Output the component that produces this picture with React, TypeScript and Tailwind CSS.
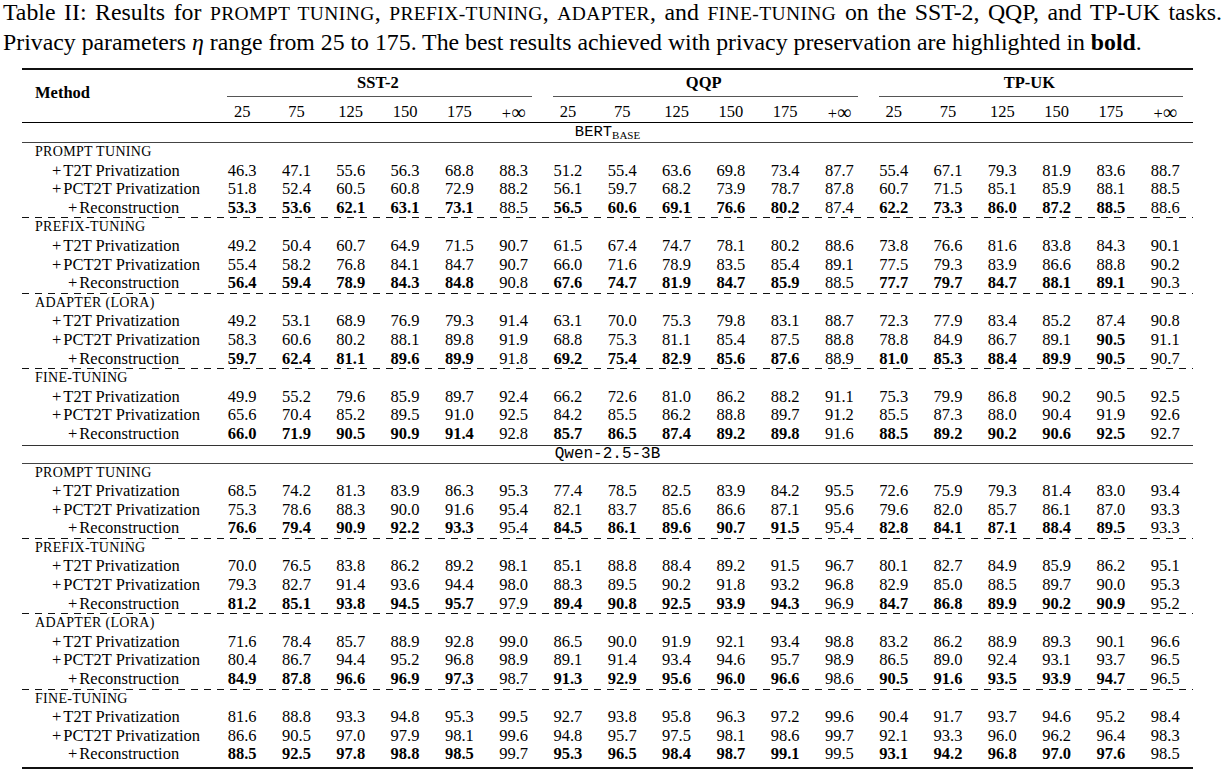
import React from "react";

const COLS = ["25", "75", "125", "150", "175", "+∞"];
const TASKS = ["SST-2", "QQP", "TP-UK"];

type Block = { title: string; rows: [string, string, string] };

const BERT: Block[] = [
  {
    title: "PROMPT TUNING",
    rows: [
      "46.3 47.1 55.6 56.3 68.8 88.3 51.2 55.4 63.6 69.8 73.4 87.7 55.4 67.1 79.3 81.9 83.6 88.7",
      "51.8 52.4 60.5 60.8 72.9 88.2 56.1 59.7 68.2 73.9 78.7 87.8 60.7 71.5 85.1 85.9 88.1 88.5",
      "53.3 53.6 62.1 63.1 73.1 88.5 56.5 60.6 69.1 76.6 80.2 87.4 62.2 73.3 86.0 87.2 88.5 88.6",
    ],
  },
  {
    title: "PREFIX-TUNING",
    rows: [
      "49.2 50.4 60.7 64.9 71.5 90.7 61.5 67.4 74.7 78.1 80.2 88.6 73.8 76.6 81.6 83.8 84.3 90.1",
      "55.4 58.2 76.8 84.1 84.7 90.7 66.0 71.6 78.9 83.5 85.4 89.1 77.5 79.3 83.9 86.6 88.8 90.2",
      "56.4 59.4 78.9 84.3 84.8 90.8 67.6 74.7 81.9 84.7 85.9 88.5 77.7 79.7 84.7 88.1 89.1 90.3",
    ],
  },
  {
    title: "ADAPTER (LORA)",
    rows: [
      "49.2 53.1 68.9 76.9 79.3 91.4 63.1 70.0 75.3 79.8 83.1 88.7 72.3 77.9 83.4 85.2 87.4 90.8",
      "58.3 60.6 80.2 88.1 89.8 91.9 68.8 75.3 81.1 85.4 87.5 88.8 78.8 84.9 86.7 89.1 *90.5 91.1",
      "59.7 62.4 81.1 89.6 89.9 91.8 69.2 75.4 82.9 85.6 87.6 88.9 81.0 85.3 88.4 89.9 90.5 90.7",
    ],
  },
  {
    title: "FINE-TUNING",
    rows: [
      "49.9 55.2 79.6 85.9 89.7 92.4 66.2 72.6 81.0 86.2 88.2 91.1 75.3 79.9 86.8 90.2 90.5 92.5",
      "65.6 70.4 85.2 89.5 91.0 92.5 84.2 85.5 86.2 88.8 89.7 91.2 85.5 87.3 88.0 90.4 91.9 92.6",
      "66.0 71.9 90.5 90.9 91.4 92.8 85.7 86.5 87.4 89.2 89.8 91.6 88.5 89.2 90.2 90.6 92.5 92.7",
    ],
  },
];

const QWEN: Block[] = [
  {
    title: "PROMPT TUNING",
    rows: [
      "68.5 74.2 81.3 83.9 86.3 95.3 77.4 78.5 82.5 83.9 84.2 95.5 72.6 75.9 79.3 81.4 83.0 93.4",
      "75.3 78.6 88.3 90.0 91.6 95.4 82.1 83.7 85.6 86.6 87.1 95.6 79.6 82.0 85.7 86.1 87.0 93.3",
      "76.6 79.4 90.9 92.2 93.3 95.4 84.5 86.1 89.6 90.7 91.5 95.4 82.8 84.1 87.1 88.4 89.5 93.3",
    ],
  },
  {
    title: "PREFIX-TUNING",
    rows: [
      "70.0 76.5 83.8 86.2 89.2 98.1 85.1 88.8 88.4 89.2 91.5 96.7 80.1 82.7 84.9 85.9 86.2 95.1",
      "79.3 82.7 91.4 93.6 94.4 98.0 88.3 89.5 90.2 91.8 93.2 96.8 82.9 85.0 88.5 89.7 90.0 95.3",
      "81.2 85.1 93.8 94.5 95.7 97.9 89.4 90.8 92.5 93.9 94.3 96.9 84.7 86.8 89.9 90.2 90.9 95.2",
    ],
  },
  {
    title: "ADAPTER (LORA)",
    rows: [
      "71.6 78.4 85.7 88.9 92.8 99.0 86.5 90.0 91.9 92.1 93.4 98.8 83.2 86.2 88.9 89.3 90.1 96.6",
      "80.4 86.7 94.4 95.2 96.8 98.9 89.1 91.4 93.4 94.6 95.7 98.9 86.5 89.0 92.4 93.1 93.7 96.5",
      "84.9 87.8 96.6 96.9 97.3 98.7 91.3 92.9 95.6 96.0 96.6 98.6 90.5 91.6 93.5 93.9 94.7 96.5",
    ],
  },
  {
    title: "FINE-TUNING",
    rows: [
      "81.6 88.8 93.3 94.8 95.3 99.5 92.7 93.8 95.8 96.3 97.2 99.6 90.4 91.7 93.7 94.6 95.2 98.4",
      "86.6 90.5 97.0 97.9 98.1 99.6 94.8 95.7 97.5 98.1 98.6 99.7 92.1 93.3 96.0 96.2 96.4 98.3",
      "88.5 92.5 97.8 98.8 98.5 99.7 95.3 96.5 98.4 98.7 99.1 99.5 93.1 94.2 96.8 97.0 97.6 98.5",
    ],
  },
];

const GRID = "grid grid-cols-[193px_repeat(18,54.3px)]";

// small caps in the caption
function Sc({ children }: { children: React.ReactNode }) {
  return <span className="text-[19.5px] tracking-[0.4px]">{children}</span>;
}

function Plus({ children }: { children: React.ReactNode }) {
  return (
    <>
      <span className="mr-[2px]">+</span>
      {children}
    </>
  );
}

function Inf() {
  return (
    <span>
      +<span className="text-[20px] leading-none">∞</span>
    </span>
  );
}

function DataRow({ label, indent, values, recon }: { label: string; indent: string; values: string; recon: boolean }) {
  const cells = values.split(" ");
  return (
    <div className={`${GRID} h-[18.6px] leading-[18.6px]`}>
      <div className={indent}>
        <Plus>{label}</Plus>
      </div>
      {cells.map((v, i) => {
        const bold = v.startsWith("*") || (recon && i % 6 !== 5);
        return (
          <div key={i} className={bold ? "text-center font-bold" : "text-center"}>
            {v.replace("*", "")}
          </div>
        );
      })}
    </div>
  );
}

function Dash() {
  return <div className="h-px bg-[repeating-linear-gradient(90deg,#111_0_7px,transparent_7px_13px)]" />;
}

function Section({ blocks }: { blocks: Block[] }) {
  return (
    <div>
      {blocks.map((b, bi) => (
        <div key={b.title}>
          {bi > 0 && <Dash />}
          <div className="h-[18.6px] pl-[13px] text-[14px] leading-[18.6px] tracking-[0.3px]">{b.title}</div>
          <DataRow label="T2T Privatization" indent="pl-[30px]" values={b.rows[0]} recon={false} />
          <DataRow label="PCT2T Privatization" indent="pl-[30px]" values={b.rows[1]} recon={false} />
          <DataRow label="Reconstruction" indent="pl-[46px]" values={b.rows[2]} recon={true} />
        </div>
      ))}
    </div>
  );
}

export default function App() {
  return (
    <div className="h-[776px] w-[1230px] overflow-hidden bg-white text-black font-['Liberation_Serif','Times_New_Roman',serif]">
      {/* caption */}
      <div className="-mt-[2px] w-[1222px] pl-[3px] text-[23.8px] leading-[29px]">
        <div className="whitespace-nowrap [text-align-last:justify]">
          Table II: Results for <Sc>PROMPT TUNING</Sc>, <Sc>PREFIX-TUNING</Sc>, <Sc>ADAPTER</Sc>, and{" "}
          <Sc>FINE-TUNING</Sc> on the SST-2, QQP, and TP-UK tasks.
        </div>
        <div>
          Privacy parameters <i>η</i> range from 25 to 175. The best results achieved with privacy preservation are
          highlighted in <b>bold</b>.
        </div>
      </div>

      {/* table */}
      <div className="ml-[22px] mt-[11px] w-[1171px] text-[16.5px]">
        <div className="h-[2px] bg-[#111]" />
        <div className={GRID}>
          <div className="row-span-2 pl-[13px] pt-[14px] font-bold leading-[18.6px]">Method</div>
          {TASKS.map((t) => (
            <div key={t} className="col-span-6 flex h-[27px] flex-col justify-between">
              <div className="pt-[3px] text-center font-bold leading-[20px]">{t}</div>
              <div className="ml-[12px] mr-[9px] h-px bg-[#555]" />
            </div>
          ))}
          {TASKS.map((t) =>
            COLS.map((c) => (
              <div key={t + c} className="h-[25px] pt-[5px] text-center leading-[20px]">
                {c === "+∞" ? <Inf /> : c}
              </div>
            ))
          )}
        </div>
        <div className="h-px bg-black" />
        <div className="h-[19px] text-center font-['Liberation_Mono','Courier_New',monospace] text-[15.5px] leading-[19px]">
          BERT<sub className="font-['Liberation_Serif',serif] text-[11px]">BASE</sub>
        </div>
        <div className="h-px bg-[#444]" />
        <Section blocks={BERT} />
        <div className="mt-[1px] h-px bg-[#333]" />
        <div className="h-[17px] text-center font-['Liberation_Mono','Courier_New',monospace] text-[16px] leading-[17px]">
          Qwen-2.5-3B
        </div>
        <div className="h-px bg-[#444]" />
        <Section blocks={QWEN} />
        <div className="mt-[3px] h-[2px] bg-[#111]" />
      </div>
    </div>
  );
}
